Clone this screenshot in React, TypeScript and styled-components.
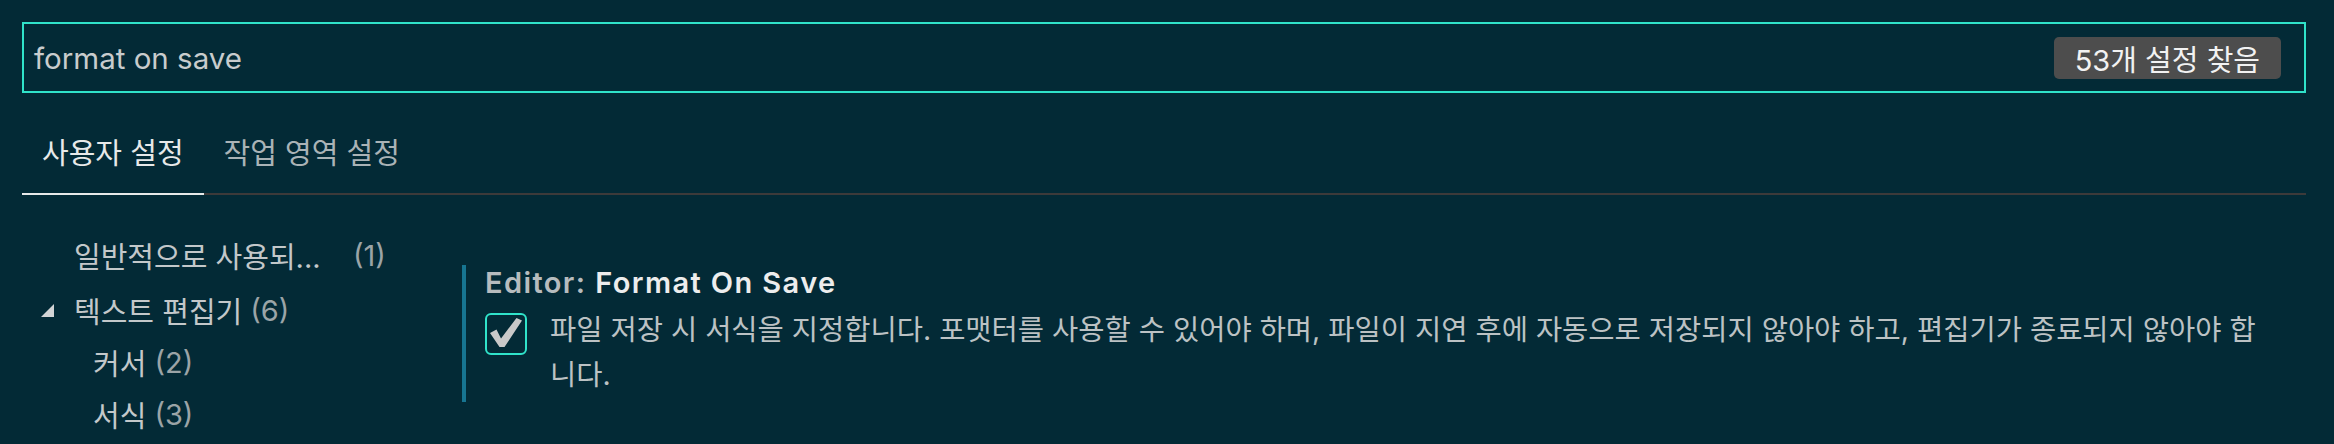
import React from "react";
import styled, { createGlobalStyle } from "styled-components";

const GlobalStyle = createGlobalStyle`
  html, body {
    margin: 0;
    padding: 0;
    background: #032a36;
  }
  body {
    font-family: "Inter", "Noto Sans CJK KR", sans-serif;
    -webkit-font-smoothing: antialiased;
  }
`;

const Page = styled.div`
  box-sizing: border-box;
  width: 2334px;
  height: 444px;
  padding: 22px 28px 0 22px;
  background: #032a36;
  overflow: hidden;
`;

const SearchBox = styled.div`
  box-sizing: border-box;
  height: 71px;
  border: 2px solid #30e3ca;
  display: flex;
  align-items: center;
  padding: 0 23px 0 10px;
`;

const SearchText = styled.div`
  flex: 1;
  font-size: 29.5px;
  color: #c8cccd;
`;

const CountBadge = styled.div`
  height: 42px;
  padding: 0 21px;
  display: flex;
  align-items: center;
  background: #4d4d4d;
  border-radius: 5px;
  color: #f2f2f2;
  font-size: 29px;
`;

const TabBar = styled.div`
  display: flex;
  margin-top: 41px;
  border-bottom: 2px solid #3d3a3a;
`;

const Tab = styled.div<{ $active?: boolean }>`
  padding: 0 20px 19px;
  line-height: 40px;
  font-size: 29px;
  margin-bottom: -2px;
  color: ${(p) => (p.$active ? "#e7e9e9" : "#aab3b6")};
  border-bottom: 2px solid ${(p) => (p.$active ? "#e7e9e9" : "transparent")};
`;

const Body = styled.div`
  display: flex;
`;

const Tree = styled.div`
  width: 440px;
  flex-shrink: 0;
  padding-top: 34px;
`;

const TreeRow = styled.div<{ $level: number; $gapAfter?: number }>`
  display: flex;
  align-items: center;
  height: 52px;
  padding-left: ${(p) => 19 + p.$level * 19}px;
  margin-bottom: ${(p) => p.$gapAfter ?? 0}px;
  font-size: 29px;
  color: #c3c8ca;
  white-space: nowrap;
`;

const Twistie = styled.span`
  width: 33px;
  flex-shrink: 0;
  display: flex;
  align-items: center;
`;

const Label = styled.span<{ $width?: number }>`
  display: inline-block;
  white-space: nowrap;
  ${(p) => (p.$width ? `width: ${p.$width}px;` : "")}
`;

const Count = styled.span`
  color: #9ba4a7;
  margin-left: 8px;
`;

const Settings = styled.div`
  flex: 1;
  padding-top: 70px;
`;

const SettingItem = styled.div`
  border-left: 4px solid #177591;
  padding: 0 0 5px 19px;
`;

const Title = styled.div`
  font-size: 29px;
  font-weight: 600;
  letter-spacing: 1.4px;
  line-height: 36px;
  color: #ededed;
`;

const Category = styled.span`
  color: #b7bcbe;
`;

const ValueRow = styled.div`
  display: flex;
  align-items: flex-start;
  margin-top: 10px;
`;

const CheckBox = styled.div`
  box-sizing: border-box;
  width: 42px;
  height: 42px;
  flex-shrink: 0;
  border: 2px solid #30e3ca;
  border-radius: 6px;
  display: flex;
  align-items: center;
  justify-content: center;
  margin-top: 2px;
`;

const Description = styled.div`
  margin-left: 23px;
  font-size: 28.5px;
  line-height: 45px;
  color: #bcc2c4;
  margin-top: -4px;
  padding-right: 26px;
`;

const CheckMark = () => (
  <svg width="38" height="38" viewBox="0 0 38 38">
    <path d="M3 18 L9.5 14.5 L14 23.5 L29.5 3 L35 5.5 L17.5 32 L12.5 32 Z" fill="#c9c9c9" />
  </svg>
);

const TwistieIcon = () => (
  <svg width="13" height="13" viewBox="0 0 13 13">
    <polygon points="13,0 13,13 0,13" fill="#d2d4d5" />
  </svg>
);

export default function App() {
  return (
    <>
      <GlobalStyle />
      <Page>
        <SearchBox>
          <SearchText>format on save</SearchText>
          <CountBadge>53개 설정 찾음</CountBadge>
        </SearchBox>
        <TabBar>
          <Tab $active>사용자 설정</Tab>
          <Tab>작업 영역 설정</Tab>
        </TabBar>
        <Body>
          <Tree>
            <TreeRow $level={0} $gapAfter={3}>
              <Twistie />
              <Label $width={271}>일반적으로 사용되...</Label>
              <Count>(1)</Count>
            </TreeRow>
            <TreeRow $level={0}>
              <Twistie>
                <TwistieIcon />
              </Twistie>
              <Label>텍스트 편집기</Label>
              <Count>(6)</Count>
            </TreeRow>
            <TreeRow $level={1}>
              <Twistie />
              <Label>커서</Label>
              <Count>(2)</Count>
            </TreeRow>
            <TreeRow $level={1}>
              <Twistie />
              <Label>서식</Label>
              <Count>(3)</Count>
            </TreeRow>
          </Tree>
          <Settings>
            <SettingItem>
              <Title>
                <Category>Editor: </Category>Format On Save
              </Title>
              <ValueRow>
                <CheckBox>
                  <CheckMark />
                </CheckBox>
                <Description>
                  파일 저장 시 서식을 지정합니다. 포맷터를 사용할 수 있어야 하며, 파일이 지연 후에 자동으로 저장되지 않아야 하고, 편집기가 종료되지 않아야 합니다.
                </Description>
              </ValueRow>
            </SettingItem>
          </Settings>
        </Body>
      </Page>
    </>
  );
}
